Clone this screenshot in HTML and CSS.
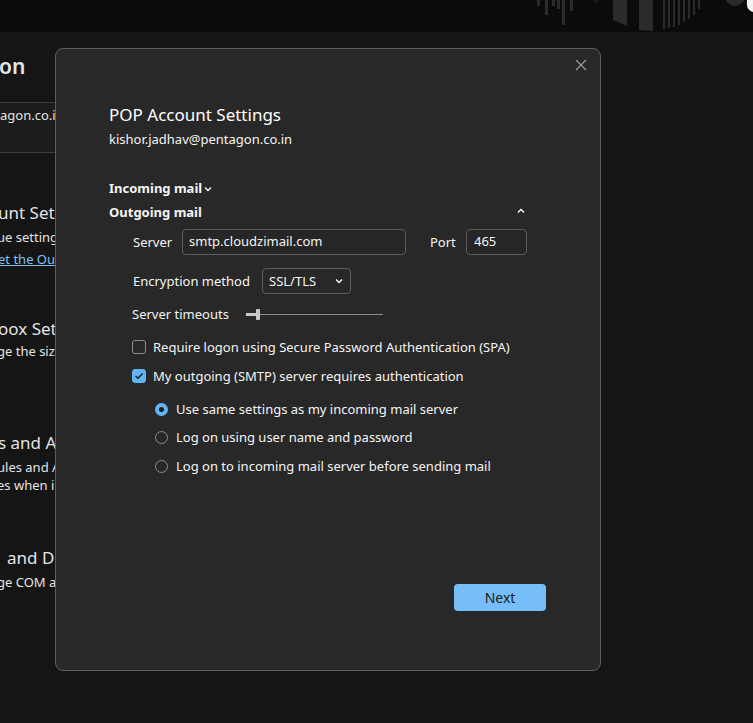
FILE: index.html
```html
<!DOCTYPE html>
<html lang="en">
<head>
  <meta charset="UTF-8" />
  <meta name="viewport" content="width=device-width, initial-scale=1.0"/>
  <title>POP Account Settings</title>
  <link rel="stylesheet" href="styles.css">
</head>
<body>

  <header class="topbar">
    <svg class="art" width="220" height="32" viewBox="0 0 220 32">
      <g fill="#2b2b2b">
        <rect x="4" y="0" width="3" height="6"/>
        <rect x="12" y="0" width="3" height="15"/>
        <rect x="19" y="0" width="3" height="6"/>
        <rect x="24" y="0" width="3" height="9"/>
        <rect x="29" y="0" width="3" height="25"/>
        <rect x="37" y="0" width="3" height="11"/>
        <path d="M80 0 L94 0 L94 26 L80 20 Z"/>
        <path d="M106 0 L120 0 L120 31 L106 30 Z"/>
        <rect x="130" y="0" width="2" height="29"/>
        <rect x="135" y="0" width="2" height="28"/>
        <rect x="140" y="0" width="2" height="27"/>
        <rect x="145" y="0" width="2" height="25"/>
        <rect x="150" y="0" width="2" height="22"/>
        <rect x="155" y="0" width="2" height="19"/>
        <rect x="160" y="0" width="2" height="15"/>
        <rect x="165" y="0" width="2" height="9"/>
      </g>
      <path d="M60 0 L64 0 L64 4 Z" fill="#1e1e1e"/>
      <circle cx="202" cy="-4" r="10" fill="#2a2a2a"/>
      <path d="M214 0 L220 0 L220 12 C216 11 213 8 214 0 Z" fill="#f2f2f2"/>
    </svg>
  </header>

  <main class="settings">
    <h2 class="page-title">on</h2>
    <div class="account-box">agon.co.i</div>

    <section class="block b1">
      <h3>unt Set</h3>
      <p>ue setting</p>
      <a href="#">et the Ou</a>
    </section>

    <section class="block b2">
      <h3>oox Set</h3>
      <p>ge the siz</p>
    </section>

    <section class="block b3">
      <h3>s and A</h3>
      <p>ules and A</p>
      <p class="tight">es when i</p>
    </section>

    <section class="block b4">
      <h3 class="indent">and Di</h3>
      <p>ge COM a</p>
    </section>
  </main>

  <div class="dialog">
    <button class="close" aria-label="Close">
      <svg width="12" height="12" viewBox="0 0 12 12"><path d="M1 1 L11 11 M11 1 L1 11" stroke="#9a9a9a" stroke-width="1.2"/></svg>
    </button>

    <h1>POP Account Settings</h1>
    <div class="email">kishor.jadhav@pentagon.co.in</div>

    <div class="section-head incoming">
      Incoming mail
      <svg width="8" height="6" viewBox="0 0 8 6"><path d="M1 1.5 L4 4.5 L7 1.5" fill="none" stroke="#fff" stroke-width="1.3"/></svg>
    </div>
    <div class="section-head outgoing">
      <span>Outgoing mail</span>
      <svg width="8" height="6" viewBox="0 0 8 6"><path d="M1 4.5 L4 1.5 L7 4.5" fill="none" stroke="#fff" stroke-width="1.3"/></svg>
    </div>

    <div class="row server-row">
      <label class="lbl-server">Server</label>
      <input type="text" class="field server" value="smtp.cloudzimail.com" />
      <label class="lbl-port">Port</label>
      <input type="text" class="field port" value="465" />
    </div>

    <div class="row enc-row">
      <label>Encryption method</label>
      <div class="select">
        <span>SSL/TLS</span>
        <svg width="8" height="6" viewBox="0 0 8 6"><path d="M1 1.5 L4 4.5 L7 1.5" fill="none" stroke="#fff" stroke-width="1.3"/></svg>
      </div>
    </div>

    <div class="row timeout-row">
      <label>Server timeouts</label>
      <div class="slider">
        <div class="fill"></div>
        <div class="thumb"></div>
      </div>
    </div>

    <div class="check-row spa">
      <span class="box"></span>
      <span>Require logon using Secure Password Authentication (SPA)</span>
    </div>
    <div class="check-row auth">
      <span class="box checked">
        <svg width="10" height="8" viewBox="0 0 10 8"><path d="M1.5 4 L4 6.3 L8.5 1.5" fill="none" stroke="#1a1a1a" stroke-width="1.3"/></svg>
      </span>
      <span>My outgoing (SMTP) server requires authentication</span>
    </div>

    <div class="radio-row first">
      <span class="radio on"></span>
      <span>Use same settings as my incoming mail server</span>
    </div>
    <div class="radio-row">
      <span class="radio"></span>
      <span>Log on using user name and password</span>
    </div>
    <div class="radio-row last">
      <span class="radio"></span>
      <span>Log on to incoming mail server before sending mail</span>
    </div>

    <div class="footer">
      <button class="next">Next</button>
    </div>
  </div>

</body>
</html>
```

FILE: styles.css
```css
body {
  margin: 0;
  font-family: "Segoe UI", "Noto Sans", "Open Sans", sans-serif;
  background-color: #151515;
  color: #f2f2f2;
  width: 753px;
  height: 723px;
  overflow: hidden;
  position: relative;
}

.topbar {
  height: 32px;
  background: #0b0b0b;
  display: flex;
  justify-content: flex-end;
}

.art {
  display: block;
}

/* settings page behind the dialog */
.settings {
  padding-top: 21px;
  color: #e4e4e4;
}

.page-title {
  margin: 0 0 0 -1px;
  font-size: 21px;
  font-weight: 600;
  line-height: 26px;
}

.account-box {
  margin-top: 23px;
  height: 51px;
  box-sizing: border-box;
  width: 70px;
  background: #1c1c1c;
  border: 1px solid #3c3c3c;
  border-left: none;
  font-size: 13px;
  padding-top: 3px;
  white-space: nowrap;
  overflow: hidden;
}

.block {
  white-space: nowrap;
}

.block h3 {
  margin: 0 0 0 -2px;
  font-size: 17px;
  font-weight: 400;
  line-height: 20px;
}

.block h3.indent {
  margin-left: 7px;
}

.block p {
  margin: 5px 0 0 -3px;
  font-size: 13px;
  line-height: 18px;
}

.block p.tight {
  margin-top: 0;
}

.block a {
  display: block;
  margin: 4px 0 0 -2px;
  font-size: 13px;
  line-height: 18px;
  color: #7fc0f2;
}

.b1 {
  margin-top: 50px;
}

.b2 {
  margin-top: 51px;
}

.b2 p {
  margin-top: 3px;
}

.b3 {
  margin-top: 73px;
}

.b4 {
  margin-top: 54px;
}

/* dialog */
.dialog {
  position: absolute;
  left: 55px;
  top: 48px;
  width: 546px;
  height: 623px;
  box-sizing: border-box;
  background: #282828;
  border: 1px solid #5d5d5d;
  border-radius: 8px;
  padding: 55px 54px 59px 53px;
  display: flex;
  flex-direction: column;
  font-size: 13px;
  color: #f4f4f4;
}

.close {
  position: absolute;
  top: 4px;
  right: 7px;
  width: 24px;
  height: 24px;
  border: none;
  background: none;
  padding: 0;
  display: flex;
  align-items: center;
  justify-content: center;
}

h1 {
  margin: 0;
  font-size: 17px;
  font-weight: 400;
  line-height: 22px;
  color: #fff;
}

.email {
  margin-top: 4px;
  line-height: 18px;
}

.section-head {
  font-weight: 700;
  line-height: 18px;
  display: flex;
  align-items: center;
}

.incoming {
  margin-top: 31px;
  gap: 2px;
}

.incoming svg {
  margin-top: 1px;
}

.outgoing {
  margin-top: 6px;
  width: 418px;
  justify-content: space-between;
}

.outgoing svg {
  margin-right: 2px;
  margin-top: -3px;
}

.row {
  display: flex;
  align-items: center;
  padding-left: 24px;
}

.field {
  height: 26px;
  box-sizing: border-box;
  background: #262626;
  border: 1px solid #5c5c5c;
  border-radius: 4px;
  color: #f4f4f4;
  font-family: inherit;
  font-size: 13px;
  padding: 0 0 2px 6px;
}

.server-row {
  margin-top: 8px;
}

.lbl-server {
  width: 49px;
}

.server {
  width: 224px;
}

.lbl-port {
  margin-left: 24px;
  width: 36px;
}

.port {
  width: 61px;
  padding-left: 7px;
}

.enc-row {
  margin-top: 13px;
}

.enc-row label {
  width: 129px;
}

.select {
  width: 89px;
  height: 26px;
  box-sizing: border-box;
  border: 1px solid #5c5c5c;
  border-radius: 4px;
  display: flex;
  align-items: center;
  justify-content: space-between;
  padding: 0 7px 1px 6px;
}

.timeout-row {
  margin-top: 11px;
  padding-left: 23px;
  height: 18px;
}

.timeout-row label {
  width: 114px;
}

.slider {
  position: relative;
  width: 137px;
  height: 1px;
  background: #8a8a8a;
}

.slider .fill {
  width: 12px;
  height: 3px;
  margin-top: -1px;
  background: #c9c9c9;
}

.slider .thumb {
  position: absolute;
  left: 10px;
  top: -5px;
  width: 4px;
  height: 11px;
  border-radius: 1px;
  background: #c9c9c9;
}

.check-row {
  display: flex;
  align-items: center;
  gap: 7px;
  padding-left: 23px;
  height: 20px;
}

.spa {
  margin-top: 14px;
}

.auth {
  margin-top: 9px;
}

.box {
  width: 14px;
  height: 14px;
  box-sizing: border-box;
  border: 1px solid #8c8c8c;
  border-radius: 3px;
  display: flex;
  align-items: center;
  justify-content: center;
}

.box.checked {
  background: #62b4f2;
  border-color: #62b4f2;
}

.radio-row {
  display: flex;
  align-items: center;
  gap: 8px;
  padding-left: 46px;
  height: 20px;
  margin-top: 8px;
}

.radio-row.first {
  margin-top: 13px;
}

.radio-row.last {
  margin-top: 9px;
}

.radio {
  width: 13px;
  height: 13px;
  box-sizing: border-box;
  border: 1px solid #8c8c8c;
  border-radius: 50%;
}

.radio.on {
  background: #1e1e1e;
  border: 4px solid #62b4f2;
}

.footer {
  margin-top: auto;
  display: flex;
  justify-content: flex-end;
}

.next {
  width: 92px;
  height: 27px;
  border: none;
  border-radius: 4px;
  background: #77bef8;
  color: #1a1a1a;
  font-family: inherit;
  font-size: 14px;
  padding-bottom: 2px;
}
```
